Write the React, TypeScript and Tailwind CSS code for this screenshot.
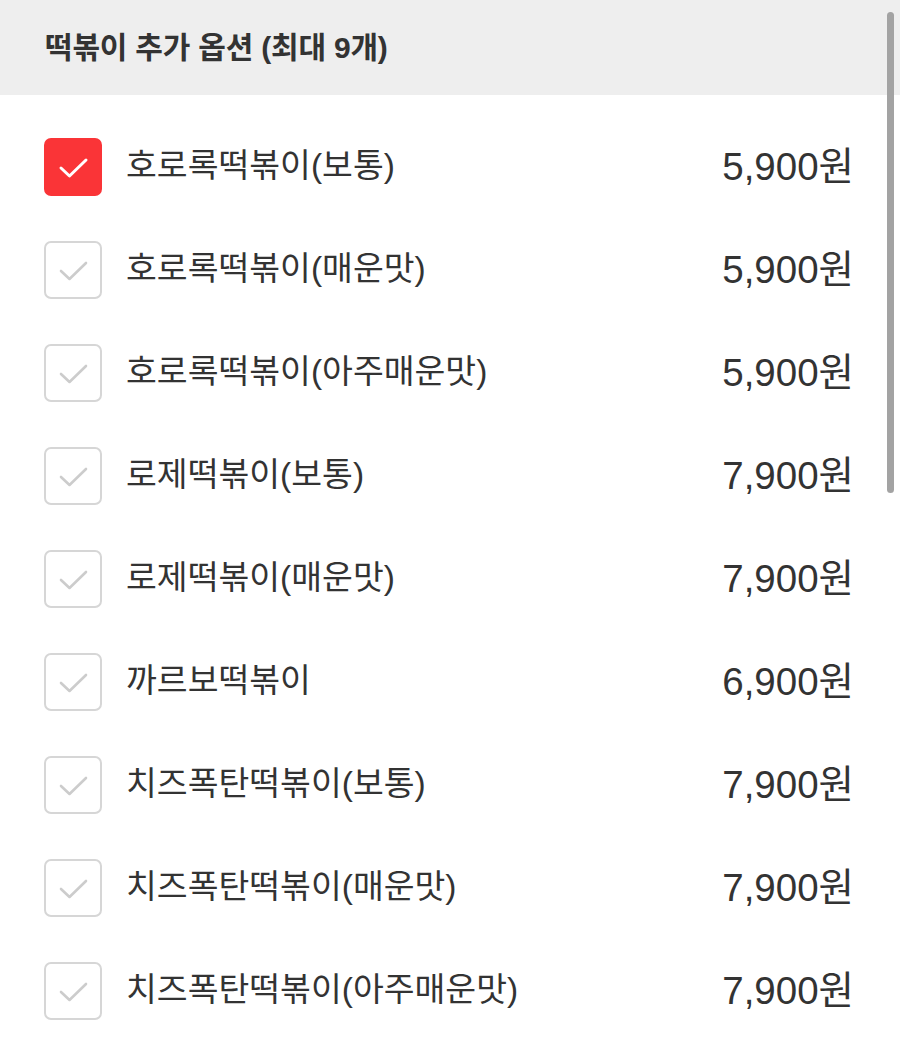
import React from "react";

const items: { name: string; price: string; checked?: boolean }[] = [
  { name: "호로록떡볶이(보통)", price: "5,900원", checked: true },
  { name: "호로록떡볶이(매운맛)", price: "5,900원" },
  { name: "호로록떡볶이(아주매운맛)", price: "5,900원" },
  { name: "로제떡볶이(보통)", price: "7,900원" },
  { name: "로제떡볶이(매운맛)", price: "7,900원" },
  { name: "까르보떡볶이", price: "6,900원" },
  { name: "치즈폭탄떡볶이(보통)", price: "7,900원" },
  { name: "치즈폭탄떡볶이(매운맛)", price: "7,900원" },
  { name: "치즈폭탄떡볶이(아주매운맛)", price: "7,900원" },
];

function Check({ checked }: { checked?: boolean }) {
  return (
    <div
      className={
        checked
          ? "w-[58px] h-[58px] rounded-[7px] bg-[#fa3437] flex items-center justify-center shrink-0"
          : "w-[58px] h-[58px] rounded-[7px] border-2 border-[#d6d6d6] bg-white flex items-center justify-center shrink-0"
      }
    >
      <svg width="58" height="58" viewBox="0 0 58 58" className="shrink-0">
        <path
          d="M17 30 L25.5 38 L42 22"
          fill="none"
          stroke={checked ? "#ffffff" : "#cccccc"}
          strokeWidth={checked ? 3 : 2.6}
          strokeLinecap="round"
          strokeLinejoin="round"
        />
      </svg>
    </div>
  );
}

export default function App() {
  return (
    <div
      className="relative w-full h-[1054px] overflow-hidden bg-white text-[#303030]"
      style={{ fontFamily: '"Liberation Sans", "Noto Sans CJK KR", sans-serif' }}
    >
      <div className="h-[95px] bg-[#eeeeee] flex items-center pl-[45px]">
        <h1 className="text-[30px] font-bold tracking-[-0.2px] text-[#333333]">떡볶이 추가 옵션 (최대 9개)</h1>
      </div>
      <div className="pt-[20px]">
        {items.map((it, i) => (
          <div key={i} className="h-[103px] flex items-center pl-[44px] pr-[46px]">
            <Check checked={it.checked} />
            <div className="ml-[24px] flex-1 text-[33.5px] text-[#333333]">{it.name}</div>
            <div className="text-[38.5px] text-[#333333]">{it.price}</div>
          </div>
        ))}
      </div>
      <div className="absolute left-[887px] top-[12px] w-[7px] h-[481px] rounded-full bg-[#a3a3a3]" />
    </div>
  );
}
